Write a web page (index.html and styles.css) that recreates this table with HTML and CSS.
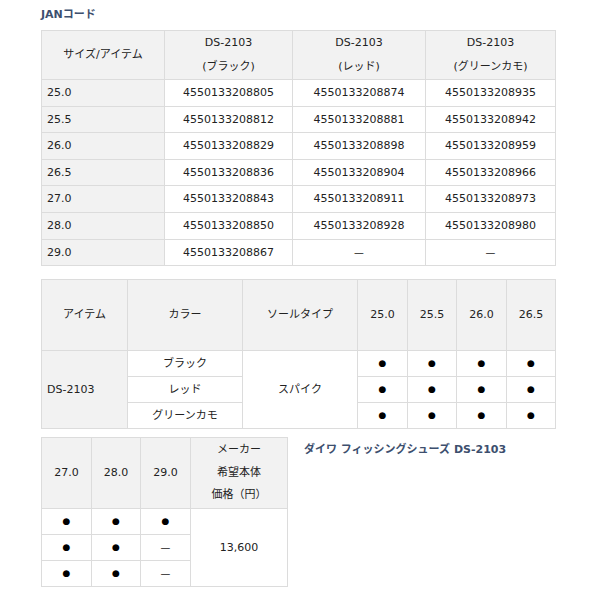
FILE: index.html
```html
<!DOCTYPE html>
<html lang="ja">
<head>
<meta charset="utf-8">
<title>JANコード</title>
<link rel="stylesheet" href="styles.css">
</head>
<body>
<div class="page">
  <h2 class="title">JANコード</h2>
  <table class="spec jan">
    <colgroup><col class="c1"><col class="c2"><col class="c3"><col class="c4"></colgroup>
    <thead>
      <tr class="head2"><th>サイズ/アイテム</th><th>DS-2103<br>(ブラック)</th><th>DS-2103<br>(レッド)</th><th>DS-2103<br>(グリーンカモ)</th></tr>
    </thead>
    <tbody>
      <tr><th class="side">25.0</th><td>4550133208805</td><td>4550133208874</td><td>4550133208935</td></tr>
      <tr><th class="side">25.5</th><td>4550133208812</td><td>4550133208881</td><td>4550133208942</td></tr>
      <tr><th class="side">26.0</th><td>4550133208829</td><td>4550133208898</td><td>4550133208959</td></tr>
      <tr><th class="side">26.5</th><td>4550133208836</td><td>4550133208904</td><td>4550133208966</td></tr>
      <tr><th class="side">27.0</th><td>4550133208843</td><td>4550133208911</td><td>4550133208973</td></tr>
      <tr><th class="side">28.0</th><td>4550133208850</td><td>4550133208928</td><td>4550133208980</td></tr>
      <tr><th class="side">29.0</th><td>4550133208867</td><td class="dash">—</td><td class="dash">—</td></tr>
    </tbody>
  </table>

  <table class="spec sizes">
    <colgroup><col class="s1"><col class="s2"><col class="s3"><col class="s4"><col class="s5"><col class="s6"><col class="s7"></colgroup>
    <thead>
      <tr class="head1"><th>アイテム</th><th>カラー</th><th>ソールタイプ</th><th>25.0</th><th>25.5</th><th>26.0</th><th>26.5</th></tr>
    </thead>
    <tbody>
      <tr><th class="side" rowspan="3">DS-2103</th><td>ブラック</td><td rowspan="3">スパイク</td><td class="dot">●</td><td class="dot">●</td><td class="dot">●</td><td class="dot">●</td></tr>
      <tr><td>レッド</td><td class="dot">●</td><td class="dot">●</td><td class="dot">●</td><td class="dot">●</td></tr>
      <tr><td>グリーンカモ</td><td class="dot">●</td><td class="dot">●</td><td class="dot">●</td><td class="dot">●</td></tr>
    </tbody>
  </table>

  <div class="bottom">
    <table class="spec sizes2">
      <colgroup><col class="t1"><col class="t2"><col class="t3"><col class="t4"></colgroup>
      <thead>
        <tr class="head3"><th>27.0</th><th>28.0</th><th>29.0</th><th>メーカー<br>希望本体<br>価格（円）</th></tr>
      </thead>
      <tbody>
        <tr><td class="dot">●</td><td class="dot">●</td><td class="dot">●</td><td rowspan="3">13,600</td></tr>
        <tr><td class="dot">●</td><td class="dot">●</td><td class="dash">—</td></tr>
        <tr><td class="dot">●</td><td class="dot">●</td><td class="dash">—</td></tr>
      </tbody>
    </table>
    <p class="product">ダイワ フィッシングシューズ DS-2103</p>
  </div>
</div>
</body>
</html>
```
FILE: styles.css
```css
html, body {
  margin: 0;
  padding: 0;
  background: #fff;
}
body {
  font-family: "DejaVu Sans", "Noto Sans CJK JP", sans-serif;
  font-size: 11px;
  color: #222;
}
.page {
  padding: 7px 0 0 41px;
}
.title {
  margin: 0 0 7px;
  font-size: 11px;
  line-height: 16px;
  font-weight: bold;
  color: #3d4f6e;
}
.spec {
  border-collapse: collapse;
  table-layout: fixed;
  border: 1px solid #dcdcdc;
}
.spec th, .spec td {
  border: 1px solid #dcdcdc;
  padding: 4px 5px;
  line-height: 17.6px;
  text-align: center;
  font-weight: normal;
  vertical-align: middle;
}
.spec thead th {
  background: #f2f2f2;
}
.spec th.side {
  background: #f2f2f2;
  text-align: left;
}
.spec td.dot {
  font-size: 9px;
  color: #000;
}
.spec td.dash {
  font-family: "Noto Sans CJK JP", sans-serif;
}
.jan { width: 515px; }
.jan .c1 { width: 123px; }
.jan .c2 { width: 128px; }
.jan .c3 { width: 133px; }
.jan .c4 { width: 130px; }
.head2 th {
  padding: 0 5px;
  line-height: 24px;
}
.sizes {
  width: 515px;
  margin-top: 13px;
}
.sizes .s1 { width: 86px; }
.sizes .s2 { width: 115px; }
.sizes .s3 { width: 115px; }
.sizes .s4 { width: 50px; }
.sizes .s5 { width: 49px; }
.sizes .s6 { width: 50px; }
.sizes .s7 { width: 49px; }
.head1 th {
  height: 62px;
}
.sizes tbody td,
.sizes tbody th,
.sizes2 tbody td {
  line-height: 17px;
}
.bottom {
  display: flex;
  align-items: flex-start;
  margin-top: 8px;
}
.sizes2 { width: 247px; flex: none; }
.sizes2 .t1 { width: 50px; }
.sizes2 .t2 { width: 49px; }
.sizes2 .t3 { width: 50px; }
.sizes2 .t4 { width: 97px; }
.head3 th {
  padding: 1px 5px;
  line-height: 22.5px;
}
.product {
  margin: 5px 0 0 16px;
  font-weight: bold;
  line-height: 16px;
  color: #3d4f6e;
}
```
